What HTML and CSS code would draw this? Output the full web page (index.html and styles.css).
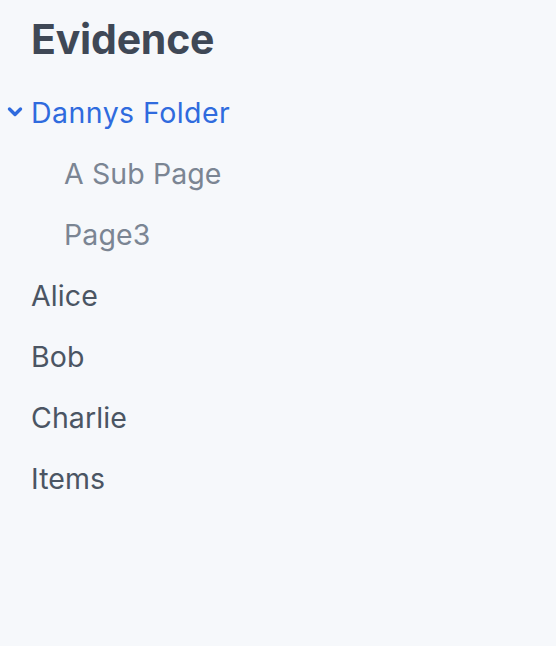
FILE: index.html
```html
<!DOCTYPE html>
<html>
<head>
<meta charset="utf-8">
<link rel="stylesheet" href="styles.css">
</head>
<body>
<nav class="sidebar">
  <h1 class="title">Evidence</h1>
  <ul class="tree">
    <li class="item folder open">
      <svg class="chev" viewBox="0 0 16 12" aria-hidden="true"><path d="M2.5 3 L8 8.5 L13.5 3" fill="none" stroke="currentColor" stroke-width="3.4" stroke-linecap="round" stroke-linejoin="round"/></svg>
      <span>Dannys Folder</span>
    </li>
    <li class="item sub">A Sub Page</li>
    <li class="item sub">Page3</li>
    <li class="item">Alice</li>
    <li class="item">Bob</li>
    <li class="item">Charlie</li>
    <li class="item">Items</li>
  </ul>
</nav>
</body>
</html>
```
FILE: styles.css
```css
html, body {
  margin: 0;
  padding: 0;
  background: #f6f8fb;
  height: 100%;
}
body {
  font-family: Inter, "Noto Sans", sans-serif;
}
.sidebar {
  padding: 14px 0 0 31px;
}
.title {
  margin: 0 0 18px 0;
  font-size: 41px;
  font-weight: 700;
  line-height: 50px;
  color: #3f4856;
  letter-spacing: -0.2px;
}
.tree {
  list-style: none;
  margin: 0;
  padding: 0;
}
.item {
  position: relative;
  font-size: 28.5px;
  letter-spacing: 0.1px;
  line-height: 61px;
  height: 61px;
  color: #4b5563;
}
.folder {
  color: #2f6bde;
  letter-spacing: 0.45px;
}
.chev {
  position: absolute;
  left: -24px;
  top: 24px;
  width: 16px;
  height: 12px;
  color: #2f6bde;
}
.sub {
  padding-left: 33px;
  color: #7b8593;
}
```
